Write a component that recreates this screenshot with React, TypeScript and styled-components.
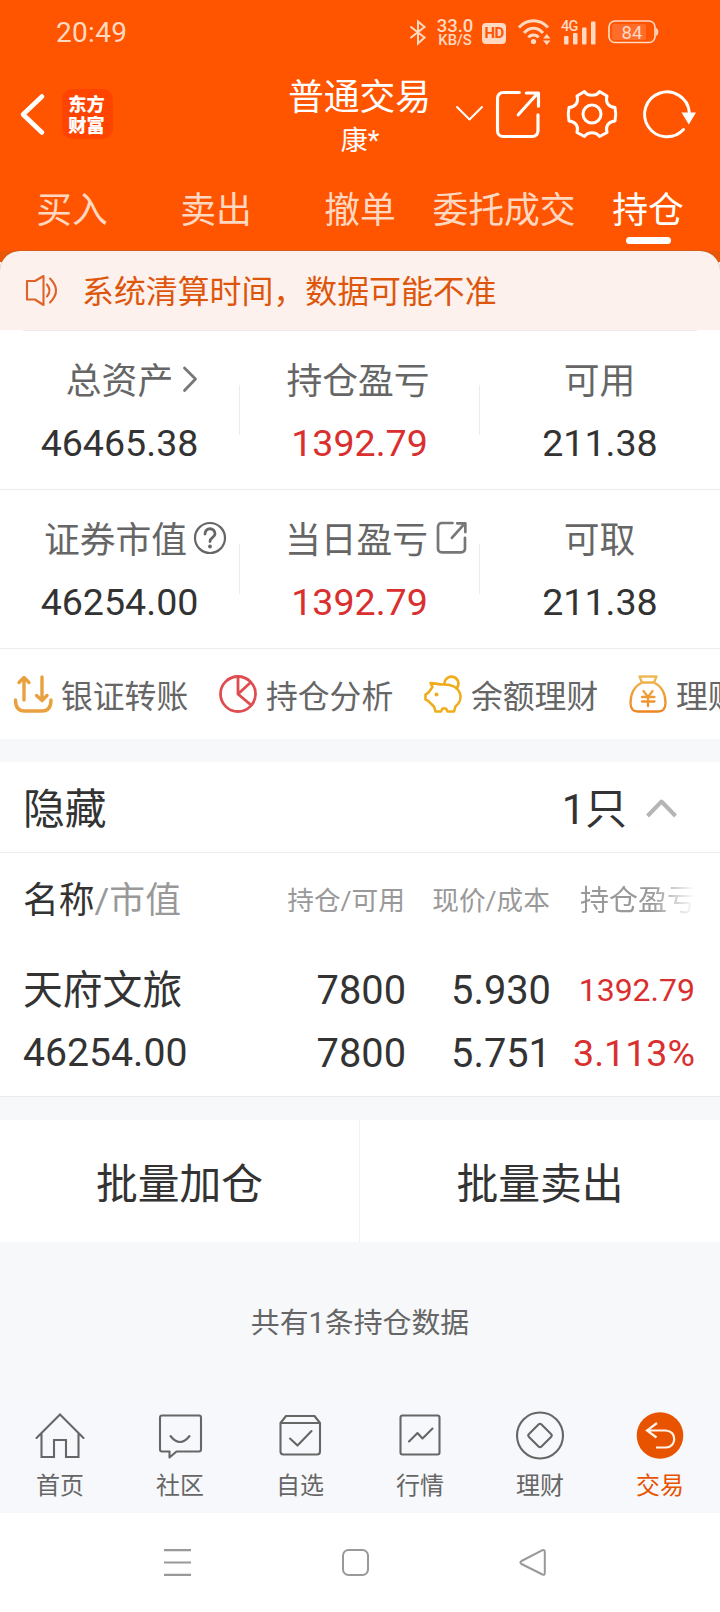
import React from "react";
import styled, { createGlobalStyle } from "styled-components";

const ORANGE = "#ff5500";
const SOFT = "#ffd9c2";
const LINE = "#ececee";
const GREY_BG = "#f7f8fa";
const RED = "#d9302f";

const GlobalStyle = createGlobalStyle`
  * { box-sizing: border-box; }
  body {
    margin: 0;
    background: #fff;
    font-family: Roboto, "Noto Sans CJK SC", sans-serif;
    color: #333;
  }
  svg { display: block; flex: none; overflow: visible; }
`;

const Screen = styled.div`
  width: 720px;
  height: 1612px;
  overflow: hidden;
  display: flex;
  flex-direction: column;
`;

const Header = styled.header`
  height: 251px;
  flex: none;
  background: ${ORANGE};
  color: #fff;
`;

const StatusBar = styled.div`
  height: 64px;
  padding: 0 61px 0 56px;
  display: flex;
  align-items: center;
  color: ${SOFT};
`;

const Clock = styled.span`
  margin-top: 2px;
  font-size: 28px;
  line-height: 32px;
  letter-spacing: 0.3px;
  margin-right: auto;
`;

const NetSpeed = styled.div`
  width: 36px;
  margin: 2px 9px 0 11px;
  text-align: center;
  font-weight: 500;
  white-space: nowrap;
`;

const SpeedLine = styled.div<{ $size: number }>`
  display: flex;
  justify-content: center;
  font-size: ${(p) => p.$size}px;
  line-height: 14px;
`;

const HdBadge = styled.div`
  width: 24px;
  height: 21px;
  margin: 3px 12px 0 0;
  border-radius: 4px;
  background: ${SOFT};
  color: ${ORANGE};
  font-size: 15px;
  font-weight: 700;
  line-height: 21px;
  text-align: center;
  letter-spacing: -0.6px;
`;

const Signal = styled.div`
  margin-left: 11px;
`;

const Battery = styled.div`
  margin-left: 11px;
`;

const TitleBar = styled.div`
  height: 103px;
  display: grid;
  grid-template-columns: 1fr 144px 1fr;
`;

const TitleLeft = styled.div`
  display: flex;
  align-items: flex-start;
  padding: 25px 0 0 20px;
`;

const BackIcon = styled.div`
  margin: 5px 18px 0 0;
`;

const Logo = styled.div`
  width: 51px;
  height: 50px;
  padding: 5px 2px 0 0;
  border-radius: 10px;
  background: #ff4400;
  text-align: center;
  font-size: 18.2px;
  font-weight: 900;
  line-height: 21px;
`;

const TitleText = styled.div`
  text-align: center;
  white-space: nowrap;
`;

const Title = styled.div`
  margin-top: 10px;
  margin-left: -1px;
  font-size: 35.8px;
  line-height: 48px;
`;

const SubTitle = styled.div`
  font-size: 27px;
  line-height: 38px;
`;

const TitleRight = styled.div`
  display: flex;
  align-items: flex-start;
  padding: 26px 0 0 23px;
`;

const ToolIcon = styled.div<{ $gap: number; $top?: number }>`
  margin-left: ${(p) => p.$gap}px;
  margin-top: ${(p) => p.$top ?? 0}px;
`;

const Tabs = styled.nav`
  height: 84px;
  display: grid;
  grid-template-columns: repeat(5, 144px);
`;

const Tab = styled.div<{ $active?: boolean }>`
  display: flex;
  flex-direction: column;
  align-items: center;
  padding-top: 20px;
  font-size: 35.8px;
  line-height: 48px;
  color: ${(p) => (p.$active ? "#fff" : "#ffd8c2")};
  white-space: nowrap;

  &::after {
    content: "";
    display: ${(p) => (p.$active ? "block" : "none")};
    width: 45px;
    height: 7px;
    margin-top: 2px;
    border-radius: 4px;
    background: #fff;
  }
`;

const NoticeWrap = styled.div`
  flex: none;
  height: 79px;
  background: linear-gradient(#e85704 0 11px, #fdf1ec 11px);
`;

const Notice = styled.div`
  height: 79px;
  padding: 0 0 1px 26px;
  border-radius: 20px 20px 0 0;
  background: #fcf1ec;
  box-shadow: 0 -1px 0 rgba(180, 100, 50, 0.55);
  clip-path: inset(-1px 0 0 0);
  display: flex;
  align-items: center;
  gap: 24px;
  color: #de560c;
  font-size: 31.9px;
`;

const NoticeText = styled.span`
  line-height: 42px;
  padding-top: 3px;
`;

const Summary = styled.section`
  height: 159px;
  flex: none;
  display: grid;
  grid-template-columns: repeat(3, 240px);
  border-bottom: 1px solid ${LINE};
`;

const TopRule = styled.div`
  flex: none;
  height: 1px;
  margin: 0 23px;
  background: ${LINE};
`;

const Metric = styled.div`
  display: grid;
  grid-template-columns: 239px 1px;
  align-items: start;
  &:last-child { grid-template-columns: 240px; }
`;

const MetricBody = styled.div`
  padding-top: 27px;
  text-align: center;
`;

const MetricRule = styled.div`
  height: 50px;
  margin-top: 54px;
  background: ${LINE};
`;

const MetricLabel = styled.div<{ $shift?: number }>`
  display: flex;
  justify-content: center;
  align-items: center;
  height: 48px;
  padding-right: ${(p) => p.$shift ?? 0}px;
  font-size: 35.8px;
  line-height: 48px;
  color: #666;
  white-space: nowrap;
`;

const LabelIcon = styled.span<{ $gap: number; $width: number }>`
  width: ${(p) => p.$width}px;
  margin: -7px ${(p) => -p.$width - p.$gap}px 0 ${(p) => p.$gap}px;
  color: #777;
`;

const MetricValue = styled.div<{ $red?: boolean }>`
  margin-top: 12px;
  font-size: 37.6px;
  line-height: 50px;
  color: ${(p) => (p.$red ? RED : "#333")};
`;

const QuickRow = styled.section`
  height: 90px;
  flex: none;
  display: flex;
  padding-left: 14px;
  overflow: hidden;
`;

const QuickItem = styled.div`
  flex: 0 0 205px;
  display: flex;
  align-items: center;
  gap: 9px;
  font-size: 31.8px;
  line-height: 42px;
  color: #666;
  white-space: nowrap;
`;

const QuickText = styled.span`
  padding-top: 5px;
`;

const Spacer = styled.div<{ $h: number }>`
  flex: none;
  height: ${(p) => p.$h}px;
  background: ${GREY_BG};
`;

const GroupRow = styled.section`
  height: 91px;
  flex: none;
  display: flex;
  align-items: center;
  justify-content: space-between;
  padding: 6px 43px 0 23px;
  border-bottom: 1px solid ${LINE};
  font-size: 41.8px;
  line-height: 56px;
`;

const GroupCount = styled.div`
  display: flex;
  align-items: center;
  gap: 19px;

  svg { margin-bottom: 5px; }
`;

const Holdings = styled.section`
  height: 244px;
  flex: none;
  border-bottom: 1px solid ${LINE};
`;

const HoldingGrid = styled.div<{ $h: number }>`
  display: grid;
  grid-template-columns: 180px 202px 145px 144px;
  padding: 0 25px 0 24px;
  height: ${(p) => p.$h}px;
  line-height: ${(p) => p.$h}px;
  font-size: 39.8px;
  white-space: nowrap;
`;

const HeadGrid = styled(HoldingGrid)`
  margin: 18px 0 28px;
  color: #999;
  font-size: 26.7px;
`;

const HeadName = styled.span`
  font-size: 35.8px;
  margin-left: -1px;
  em { font-style: normal; color: #333; }
`;

const FadeText = styled.span`
  font-size: 29px;
  padding-left: 29px;
  overflow: hidden;
  mask-image: linear-gradient(90deg, #000 70%, transparent 100%);
`;

const StockName = styled.span`
  margin-left: -1px;
`;

const StockValue = styled.span`
  margin-left: -1px;
  font-size: 39.2px;
`;

const Num = styled.span<{ $red?: boolean; $size?: number }>`
  text-align: right;
  font-size: ${(p) => (p.$size ? `${p.$size}px` : "inherit")};
  color: ${(p) => (p.$red ? RED : "inherit")};
`;

const HeadNum = styled(Num)`
  position: relative;
  right: 1px;
`;

const BatchRow = styled.section`
  height: 122px;
  flex: none;
  display: grid;
  grid-template-columns: 359px 1px 360px;
  align-items: stretch;
`;

const BatchButton = styled.div`
  text-align: center;
  font-size: 41.8px;
  line-height: 130px;
  height: 122px;
`;

const BatchRule = styled.div`
  background: #f1f2f4;
`;

const Footnote = styled.div`
  height: 159px;
  flex: none;
  background: ${GREY_BG};
  text-align: center;
  font-size: 28.9px;
  line-height: 162px;
  color: #666;
`;

const BottomTabs = styled.nav`
  height: 112px;
  flex: none;
  background: #f7f8fb;
  display: grid;
  grid-template-columns: repeat(6, 120px);
`;

const BottomTab = styled.div<{ $active?: boolean }>`
  display: flex;
  flex-direction: column;
  align-items: center;
  padding-top: 11px;
  font-size: 24px;
  line-height: 32px;
  color: ${(p) => (p.$active ? "#e85300" : "#666")};
`;

const BottomLabel = styled.span`
  margin-top: 10px;
`;

const SystemNav = styled.footer`
  height: 99px;
  flex: none;
  padding: 36px 0 0 164px;
  display: flex;
  gap: 151px;
`;

const stroke = (w: number, c = "currentColor") => ({
  fill: "none",
  stroke: c,
  strokeWidth: w,
  strokeLinecap: "round" as const,
  strokeLinejoin: "round" as const,
});

const StatusIcons = () => (
  <>
    <svg width="16" height="25" viewBox="0 0 16 25" {...stroke(2)} strokeLinejoin="miter">
      <path d="M1 7 14.500 17.500 8 23.500V1.500L14.500 7 1 17.500" />
    </svg>
    <NetSpeed>
      <SpeedLine $size={18.5}>33.0</SpeedLine>
      <SpeedLine $size={14.8}>KB/S</SpeedLine>
    </NetSpeed>
    <HdBadge>HD</HdBadge>
    <svg width="33" height="26" viewBox="0 0 33 26">
      <g fill="none" stroke={SOFT} strokeWidth="3">
        <path d="M1 8.500C9-.5 22-.5 30 8.500M6 14C11.500 7.500 19.500 7.500 25 14M10.500 18.500C13 15 18 15 20.500 18.500" />
      </g>
      <circle cx="15.500" cy="22.500" r="2.600" fill={SOFT} />
      <path d="M25 19.500h7.500l-3.750-4.500zM25 21.500h7.500l-3.750 4.500z" fill={SOFT} />
    </svg>
    <Signal>
      <svg width="35" height="26" viewBox="0 0 35 26" fill={SOFT}>
        <text x="-1" y="12" fontSize="14.500" fontWeight="500" letterSpacing="-0.800" fontFamily="Roboto, sans-serif">4G</text>
        <rect x="2" y="17" width="4.500" height="8.500" rx="1" />
        <rect x="11" y="14" width="4.500" height="11.500" rx="1" />
        <rect x="20" y="8.500" width="4.500" height="17" rx="1" />
        <rect x="29" y="2.500" width="4.500" height="23" rx="1" />
      </svg>
    </Signal>
    <Battery>
      <svg width="51" height="24" viewBox="0 0 51 24">
        <rect x="1" y="1" width="46" height="21.500" rx="6" fill="none" stroke={SOFT} strokeWidth="1.700" />
        <rect x="4" y="4" width="34" height="16" rx="2" fill="#ff6d2a" />
        <path d="M48.300 8.500c2 .3 2 6.500 0 6.800z" fill={SOFT} stroke={SOFT} />
        <text x="24" y="18.500" fontSize="18.500" textAnchor="middle" fill={SOFT} fontFamily="Roboto, sans-serif">84</text>
      </svg>
    </Battery>
  </>
);

const ShareIcon = ({ size, w }: { size: number; w: number }) => (
  <svg width={size} height={size * 1.07} viewBox="0 0 43 46" {...stroke(w)}>
    <path d="M23 1.500H7a5.500 5.500 0 0 0-5.500 5.500v32.500a5.500 5.500 0 0 0 5.500 5.500h29a5.500 5.500 0 0 0 5.500-5.500V23.500" />
    <path d="M22 23.500 41 2.500M30 2h12v13" />
  </svg>
);

const GearIcon = () => (
  <svg width="50" height="48" viewBox="0 0 50 48" {...stroke(3)}>
    <path d="M17.500 1.500C20 6.500 30 6.500 32.500 1.500L40 6C38 12 41.500 17 48 17.500Q49.500 24 48 31C41.500 31.500 38 36.500 40 42.500L32.500 46.500C29 41.500 21 41.500 17.500 46.500L10 42.500C12 36.500 8.500 31.500 2 31Q.5 24 2 17.500C8.500 17 12 12 10 6Z" />
    <circle cx="25" cy="24" r="9" />
  </svg>
);

const RefreshIcon = () => (
  <svg width="53" height="48" viewBox="0 0 53 48" {...stroke(3)}>
    <path d="M40.500 39.500A22.400 22.400 0 1 1 46.300 22" />
    <path d="M38.500 22.500h14.500l-7.200 12z" fill="currentColor" stroke="none" />
  </svg>
);

const SpeakerIcon = () => (
  <svg width="32" height="33" viewBox="0 0 32 33" {...stroke(2.1, "#e0622a")}>
    <path d="M1 7H9L17.500 2V31L9 25.500H1ZM21 10.500q5 6 0 12M24 4.500q12 12 0 24" />
  </svg>
);

const ArrowRight = () => (
  <svg width="14" height="26" viewBox="0 0 14 26" {...stroke(2.8)}>
    <path d="M1.500 2 12.500 13 1.500 24.500" />
  </svg>
);

const HelpIcon = () => (
  <svg width="32" height="32" viewBox="0 0 32 32" {...stroke(2.2, "#666")}>
    <circle cx="16" cy="16" r="15" />
    <path strokeWidth="2.800" d="M11 12C11 5 21 5 21 12C21 15.500 16 15.500 16 19.500" />
    <circle cx="16" cy="24.500" r="1.900" fill="#666" stroke="none" />
  </svg>
);

const TransferIcon = () => (
  <svg width="38" height="38" viewBox="0 0 38 38" {...stroke(3.4, "#e9a140")}>
    <path d="M10 25V3M5 7.500 10 2.500 15 7.500M28 2V25M22.500 20.500 28 25.500 33 20.500M1.500 25q0 11 9 11H28q9 0 9-11" />
  </svg>
);

const PieIcon = () => (
  <svg width="38" height="38" viewBox="0 0 38 38" {...stroke(2.8, "#df4d50")} strokeLinejoin="miter">
    <circle cx="19" cy="19" r="17.500" />
    <path d="M19 2V19L32 30M19 19 31 8" />
  </svg>
);

const PiggyIcon = () => (
  <svg width="38" height="38" viewBox="0 0 38 38" {...stroke(2.6, "#efac1b")}>
    <path d="M20 9.500C13 9.500 11 8 6.500 8L8.500 12C6 15 5.500 18 1.500 19.500V24.500C5 25.500 7 29 10 31.500L11.500 36.500H17L18.500 33.500H22L23.500 36.500H30L31.500 31.500C41 23.500 37 9.500 20 9.500Z" />
    <path d="M20.500 8A7 7 0 1 1 32.500 13.500" />
    <circle cx="12.500" cy="19.500" r="2" fill="#efac1b" stroke="none" />
  </svg>
);

const BagIcon = () => (
  <svg width="38" height="38" viewBox="0 0 38 38" {...stroke(2.3, "url(#bag)")}>
    <defs>
      <linearGradient id="bag" x1="0" y1="0" x2="0" y2="38" gradientUnits="userSpaceOnUse">
        <stop offset="0" stopColor="#eebb55" />
        <stop offset="1" stopColor="#ee8420" />
      </linearGradient>
    </defs>
    <path d="M10.500 1.500H27.500L25 7.500H13ZM13 7.500C4 12 1.500 19 1.500 28Q1.500 36.500 9 36.500H29Q36.500 36.500 36.500 28C36.500 19 34 12 25 7.500" />
    <path d="M14.500 16 19 22 23.500 16M19 22V31M13 22H25.500M13 26.500H25.500" />
  </svg>
);

const CollapseIcon = () => (
  <svg width="31" height="20" viewBox="0 0 31 20" {...stroke(4, "#b5b5b5")} strokeLinecap="butt">
    <path d="M1.500 18 15.500 3.500 29.500 18" />
  </svg>
);

const bottomIcons = {
  home: <path d="M1.500 26 25 2.500 48.500 26M6.500 21.500V45H19V28H31V45H43.500V21.500" strokeLinejoin="miter" />,
  chat: <path d="M7 3.500H44Q46 3.500 46 5.500V37.500Q46 39.500 44 39.500H21.500L14.500 45.500V39.500H7Q5 39.500 5 37.500V5.500Q5 3.500 7 3.500ZM15.500 24Q25 36 34.500 24" />,
  picks: <path d="M5.500 11 11 4H39.500L45 11V39.500Q45 42.500 42 42.500H8.500Q5.500 42.500 5.500 39.500ZM5.500 11H45M15 26.500 22.500 33.500 36.500 19" />,
  chart: <path d="M7.500 3.500H42.500Q44.500 3.500 44.500 5.500V40.500Q44.500 42.500 42.500 42.500H7.500Q5.500 42.500 5.500 40.500V5.500Q5.500 3.500 7.500 3.500ZM14 29.500 22.500 21 27.500 26.500 37.500 16.500" />,
  wealth: (
    <>
      <circle cx="25" cy="23.500" r="23" />
      <path d="M23.500 12.500Q25 11 26.500 12.500L36 22Q37.500 23.500 36 25L26.500 34.500Q25 36 23.500 34.500L14 25Q12.500 23.500 14 22Z" />
    </>
  ),
  trade: (
    <>
      <circle cx="25" cy="23.500" r="23.300" fill="#e85300" stroke="none" />
      <path stroke="#fff3e8" strokeWidth="2.200" strokeLinecap="butt" strokeLinejoin="miter" d="M22 11 12 18.500 21.500 25.500M12 18.500H31C42 19 42 35 31 35.500H21" />
    </>
  ),
};

const BottomIcon = ({ name }: { name: keyof typeof bottomIcons }) => (
  <svg width="50" height="48" viewBox="0 0 50 48" {...stroke(2.1)}>
    {bottomIcons[name]}
  </svg>
);

type MetricData = { label: string; value: string; red?: boolean; shift?: number; gap?: number; iconWidth?: number; icon?: React.ReactNode };

const metrics: MetricData[][] = [
  [
    { label: "总资产", value: "46465.38", icon: <ArrowRight />, gap: 10, iconWidth: 14 },
    { label: "持仓盈亏", value: "1392.79", red: true, shift: 3 },
    { label: "可用", value: "211.38", shift: 1 },
  ],
  [
    { label: "证券市值", value: "46254.00", icon: <HelpIcon />, gap: 7, iconWidth: 32, shift: 8 },
    { label: "当日盈亏", value: "1392.79", red: true, icon: <ShareIcon size={29} w={4} />, gap: 9, iconWidth: 30, shift: 6 },
    { label: "可取", value: "211.38", shift: 1 },
  ],
];

const tabs = ["买入", "卖出", "撤单", "委托成交", "持仓"];

const quick = [
  { label: "银证转账", icon: <TransferIcon /> },
  { label: "持仓分析", icon: <PieIcon /> },
  { label: "余额理财", icon: <PiggyIcon /> },
  { label: "理财", icon: <BagIcon /> },
];

const bottom: { label: string; icon: keyof typeof bottomIcons }[] = [
  { label: "首页", icon: "home" },
  { label: "社区", icon: "chat" },
  { label: "自选", icon: "picks" },
  { label: "行情", icon: "chart" },
  { label: "理财", icon: "wealth" },
  { label: "交易", icon: "trade" },
];

export default function App() {
  return (
    <Screen>
      <GlobalStyle />
      <Header>
        <StatusBar>
          <Clock>20:49</Clock>
          <StatusIcons />
        </StatusBar>
        <TitleBar>
          <TitleLeft>
            <BackIcon>
              <svg width="24" height="41" viewBox="0 0 24 41" {...stroke(4.6)}>
                <path d="M22 2.500 3 20.500 22 38.500" />
              </svg>
            </BackIcon>
            <Logo>
              东方
              <br />
              财富
            </Logo>
          </TitleLeft>
          <TitleText>
            <Title>普通交易</Title>
            <SubTitle>康*</SubTitle>
          </TitleText>
          <TitleRight>
            <ToolIcon $gap={1} $top={16}>
              <svg width="27" height="15" viewBox="0 0 27 15" {...stroke(2)}>
                <path d="M1 1 13.500 13.500 26 1" />
              </svg>
            </ToolIcon>
            <ToolIcon $gap={13} $top={1}>
              <ShareIcon size={43.5} w={3.1} />
            </ToolIcon>
            <ToolIcon $gap={27.5}>
              <GearIcon />
            </ToolIcon>
            <ToolIcon $gap={26}>
              <RefreshIcon />
            </ToolIcon>
          </TitleRight>
        </TitleBar>
        <Tabs>
          {tabs.map((t) => (
            <Tab key={t} $active={t === "持仓"}>
              {t}
            </Tab>
          ))}
        </Tabs>
      </Header>
      <NoticeWrap>
        <Notice>
          <SpeakerIcon />
          <NoticeText>系统清算时间，数据可能不准</NoticeText>
        </Notice>
      </NoticeWrap>
      <TopRule />
      {metrics.map((row, i) => (
        <Summary key={i}>
          {row.map((m, j) => (
            <Metric key={m.label}>
              <MetricBody>
                <MetricLabel $shift={m.shift}>
                  {m.label}
                  {m.icon && (
                    <LabelIcon $gap={m.gap ?? 0} $width={m.iconWidth ?? 0}>
                      {m.icon}
                    </LabelIcon>
                  )}
                </MetricLabel>
                <MetricValue $red={m.red}>{m.value}</MetricValue>
              </MetricBody>
              {j < 2 && <MetricRule />}
            </Metric>
          ))}
        </Summary>
      ))}
      <QuickRow>
        {quick.map((q) => (
          <QuickItem key={q.label}>
            {q.icon}
            <QuickText>{q.label}</QuickText>
          </QuickItem>
        ))}
      </QuickRow>
      <Spacer $h={23} />
      <GroupRow>
        <span>隐藏</span>
        <GroupCount>
          1只
          <CollapseIcon />
        </GroupCount>
      </GroupRow>
      <Holdings>
        <HeadGrid $h={60}>
          <HeadName>
            <em>名称</em>/市值
          </HeadName>
          <HeadNum>持仓/可用</HeadNum>
          <HeadNum>现价/成本</HeadNum>
          <FadeText>持仓盈亏</FadeText>
        </HeadGrid>
        <HoldingGrid $h={63}>
          <StockName>天府文旅</StockName>
          <Num>7800</Num>
          <Num>5.930</Num>
          <Num $red $size={32}>1392.79</Num>
        </HoldingGrid>
        <HoldingGrid $h={63}>
          <StockValue>46254.00</StockValue>
          <Num>7800</Num>
          <Num>5.751</Num>
          <Num $red $size={37.6}>3.113%</Num>
        </HoldingGrid>
      </Holdings>
      <Spacer $h={23} />
      <BatchRow>
        <BatchButton>批量加仓</BatchButton>
        <BatchRule />
        <BatchButton>批量卖出</BatchButton>
      </BatchRow>
      <Footnote>共有1条持仓数据</Footnote>
      <BottomTabs>
        {bottom.map((b) => (
          <BottomTab key={b.icon} $active={b.icon === "trade"}>
            <BottomIcon name={b.icon} />
            <BottomLabel>{b.label}</BottomLabel>
          </BottomTab>
        ))}
      </BottomTabs>
      <SystemNav>
        <svg width="27" height="27" viewBox="0 0 27 27" {...stroke(2.2, "#999")} strokeLinecap="butt">
          <path d="M0 1.200H27M0 13.500H27M0 25.800H27" />
        </svg>
        <svg width="27" height="27" viewBox="0 0 27 27" {...stroke(2, "#999")}>
          <rect x="1" y="1" width="25" height="25" rx="5.500" />
        </svg>
        <svg width="27" height="27" viewBox="0 0 27 27" {...stroke(2, "#999")}>
          <path d="M22.500 1.200Q24.800.5 24.800 3V24Q24.800 26.500 22.500 25.500L1.500 15Q-.7 13.500 1.500 12Z" />
        </svg>
      </SystemNav>
    </Screen>
  );
}
